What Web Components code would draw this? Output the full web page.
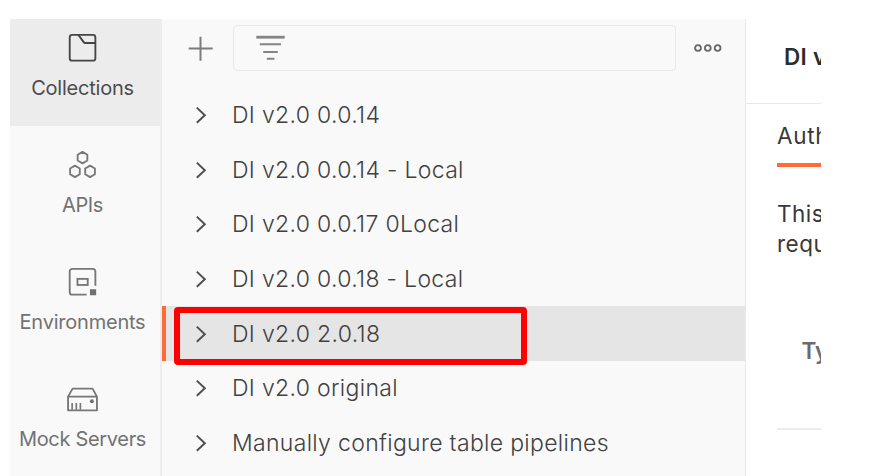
<!DOCTYPE html>
<html lang="en">
<head>
<meta charset="utf-8">
<title>Collections</title>
<style>
html, body { margin: 0; background: #fff; }
body { width: 875px; height: 476px; overflow: hidden; font-family: Inter, "Liberation Sans", sans-serif; }
</style>
</head>
<body>
<api-workspace>
  <nav-rail slot="rail">
    <rail-item label="Collections" active style="--ls:-.22px">
      <svg width="31" height="31" viewBox="0 0 32 32" fill="none" stroke="#454545" stroke-width="1.900"><rect x="2.800" y="3" width="26.500" height="26.500" rx="2.500"/><path d="M11.800 3l5.200 7.200q.8 1.200 2 1.200H29"/></svg>
    </rail-item>
    <rail-item label="APIs" style="--ls:-.4px">
      <svg width="31" height="31" viewBox="0 0 32 32" fill="none" stroke="#777" stroke-width="1.900" stroke-linejoin="round"><path d="M16 3l5 2.900v6L16 14.800l-5-2.900v-6z"/><path d="M8.200 17.200l5 2.900v6l-5 2.900-5-2.900v-6z"/><path d="M23.800 17.200l5 2.900v6l-5 2.900-5-2.900v-6z"/></svg>
    </rail-item>
    <rail-item label="Environments">
      <svg width="31" height="31" viewBox="0 0 32 32" fill="none" stroke="#777" stroke-width="1.900"><path d="M20.300 29.500H5.300a2.500 2.500 0 0 1-2.500-2.500V5.500A2.500 2.500 0 0 1 5.300 3h21.500A2.500 2.500 0 0 1 29.300 5.500v14.800"/><rect x="10.800" y="13.300" width="10.600" height="6.300"/><path d="M23.700 24h6.400v6.200h-6.400z" fill="#707070" stroke="none"/></svg>
    </rail-item>
    <rail-item label="Mock Servers" style="--ls:-.32px">
      <svg width="31" height="31" viewBox="0 0 32 32" fill="none" stroke="#777" stroke-width="1.900" stroke-linejoin="round"><path d="M1.100 13L5.800 4.800h20.600l4.500 8.200v14.200H1.100zM1.100 13H31"/><path d="M5.300 19.500v7M9.600 19.500v7M13.800 19.500v7" stroke-width="1.700"/><circle cx="25.700" cy="17.800" r="2" fill="#707070" stroke="none"/></svg>
    </rail-item>
  </nav-rail>
  <collection-list slot="list">
    <collection-row>DI v2.0 0.0.14</collection-row>
    <collection-row>DI v2.0 0.0.14 - Local</collection-row>
    <collection-row>DI v2.0 0.0.17 0Local</collection-row>
    <collection-row>DI v2.0 0.0.18 - Local</collection-row>
    <collection-row selected>DI v2.0 2.0.18</collection-row>
    <collection-row>DI v2.0 original</collection-row>
    <collection-row>Manually configure table pipelines</collection-row>
  </collection-list>
  <request-pane slot="pane">
    <span slot="title">DI v</span>
    <span slot="tab">Auth</span>
    <span slot="line1">This</span>
    <span slot="line2">requ</span>
    <span slot="type">Ty</span>
  </request-pane>
</api-workspace>

<script>
const define = (name, html) => customElements.define(name, class extends HTMLElement {
  constructor() {
    super();
    this.attachShadow({ mode: 'open' }).innerHTML = html;
  }
  connectedCallback() {
    const label = this.shadowRoot.querySelector('.label');
    if (label && this.hasAttribute('label')) label.textContent = this.getAttribute('label');
  }
});

define('api-workspace', `
<style>
:host { display: grid; grid-template-columns: 152px 584px 75px; width: 811px; height: 457.500px; padding: 18.500px 0 0 10px; }
</style>
<slot name="rail"></slot><slot name="list"></slot><slot name="pane"></slot>`);

define('nav-rail', `
<style>
:host { display: flex; flex-direction: column; gap: 9.700px; background: #f9f9f9; border-right: 2px solid #ededed; overflow: hidden; }
</style>
<slot></slot>`);

define('rail-item', `
<style>
:host { display: flex; flex-direction: column; align-items: center; flex: none; box-sizing: border-box; height: 107.500px; padding: 13.500px 7px 0 0; margin-right: -2px; color: #727272; }
:host([active]) { background: #ececec; color: #4c4c4c; }
.label { margin-top: 9.500px; font-size: 20px; line-height: 28px; white-space: nowrap; letter-spacing: var(--ls, -.22px); }
.icon { height: 32px; }
</style>
<div class="icon"><slot></slot></div><div class="label"></div>`);

define('collection-list', `
<style>
:host { display: flex; flex-direction: column; background: #f9f9f9; border-right: 1px solid #e9e9e9; overflow: hidden; }
.bar { display: flex; align-items: flex-start; flex: none; box-sizing: border-box; height: 69.100px; padding: 6.500px 22px 0 26px; }
.plus { margin-top: 10.500px; }
.filter { box-sizing: border-box; width: 443px; height: 46px; margin-left: 18.500px; padding: 9px 0 0 21px; border: 1px solid #e9e9e9; border-radius: 4px; }
.more { margin: 17px 0 0 17px; }
svg { display: block; }
</style>
<div class="bar">
  <svg class="plus" width="26" height="26" viewBox="0 0 26 26" fill="none" stroke="#7c7c7c" stroke-width="2"><path d="M.7 12.500h24M12.500.7v24"/></svg>
  <div class="filter"><svg width="32" height="28" viewBox="0 0 32 28" fill="none" stroke="#848484" stroke-width="1.900"><path d="M1.300 2.200h28.400" stroke-width="2.800"/><path d="M4.800 9.200H26M8.200 17h14.600M11.800 23.700h7.600"/></svg></div>
  <svg class="more" width="30" height="12" viewBox="0 0 30 12" fill="none" stroke="#666" stroke-width="1.800"><circle cx="5" cy="6" r="2.900"/><circle cx="14.800" cy="6" r="2.900"/><circle cx="24.600" cy="6" r="2.900"/></svg>
</div>
<slot></slot>`);

define('collection-row', `
<style>
:host { display: flex; align-items: center; flex: none; box-sizing: border-box; height: 54.700px; padding-left: 33px; position: relative; color: #414141; font-size: 23px; font-weight: 300; line-height: 30px; white-space: nowrap; }
:host([selected]) { background: #e5e5e5; box-shadow: inset 4px 0 #ff6c37; }
svg { flex: none; width: 12px; height: 18px; }
.text { margin-left: 25px; letter-spacing: .320px; }
.mark { display: none; }
:host([selected]) .mark { display: block; position: absolute; z-index: 1; left: 11.800px; top: .400px; box-sizing: border-box; width: 353px; height: 58px; border: 6px solid #f00; border-radius: 4px; }
</style>
<svg viewBox="0 0 12 18" fill="none" stroke="#505050" stroke-width="2"><path d="M1.800 1.600L9.800 9.300l-8 7.400"/></svg>
<div class="text"><slot></slot></div><div class="mark"></div>`);

define('request-pane', `
<style>
:host { display: flex; flex-direction: column; width: 75px; overflow: hidden; background: #fff; color: #383838; white-space: nowrap; font-size: 22.500px; line-height: 30px; }
.title { box-sizing: border-box; height: 85.500px; padding: 23.500px 0 0 38px; border-bottom: 1px solid #e8e8e8; font-size: 22.500px; font-weight: 600; letter-spacing: .300px; color: #2c2c2c; flex: none; }
.tab { box-sizing: border-box; height: 63px; margin-left: 31px; padding-top: 16.500px; border-bottom: 4px solid #ff6c37; letter-spacing: .700px; flex: none; }
.note { margin: 31.500px 0 0 31px; letter-spacing: .500px; }
.note div { height: 30px; }
.type { margin: 77.500px 0 0 55.500px; color: #6b6b6b; font-weight: 600; }
.rule { margin: 62px 0 0 31px; height: 1.500px; background: #ececec; flex: none; }
</style>
<div class="title"><slot name="title"></slot></div>
<div class="tab"><slot name="tab"></slot></div>
<div class="note"><div><slot name="line1"></slot></div><div><slot name="line2"></slot></div></div>
<div class="type"><slot name="type"></slot></div>
<div class="rule"></div>`);
</script>
</body>
</html>
